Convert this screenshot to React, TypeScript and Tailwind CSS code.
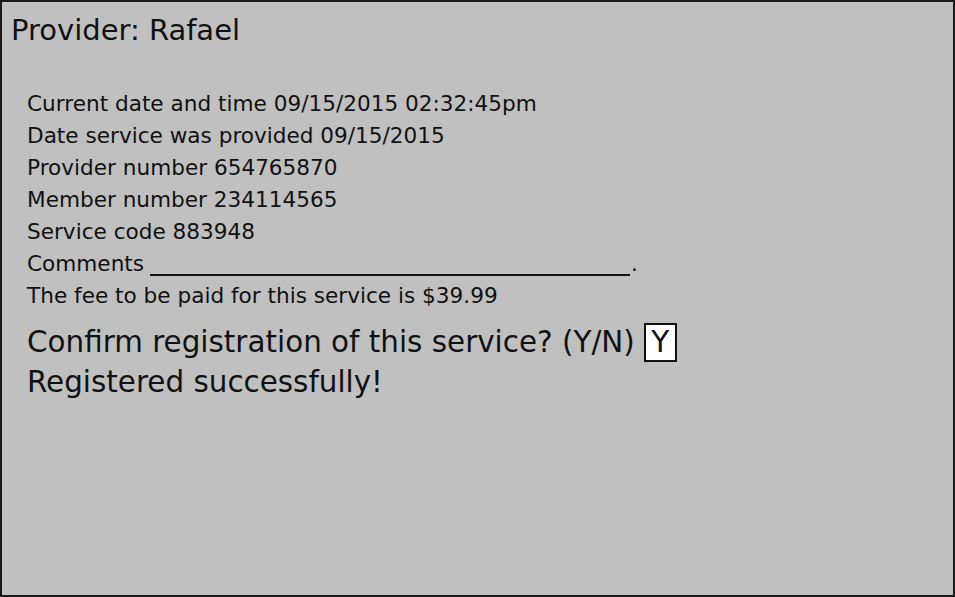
export default function App() {
  const lines = [
    "Current date and time 09/15/2015 02:32:45pm",
    "Date service was provided 09/15/2015",
    "Provider number 654765870",
    "Member number 234114565",
    "Service code 883948",
  ];

  return (
    <div className="h-[597px] w-[955px] bg-white" style={{ fontFamily: "'DejaVu Sans', 'Liberation Sans', sans-serif" }}>
      <div className="h-[597px] w-[955px] border-2 border-[#1a1a1a] bg-[#c0c0c0] text-[#111]">
        <h1 className="ml-[9px] mt-[12px] text-[29px] leading-[32px]">Provider: Rafael</h1>
        <div className="ml-[25px] mt-[42px] flex flex-col">
          {lines.map((line) => (
            <p key={line} className="text-[21.6px] leading-[32px]">{line}</p>
          ))}
          <p className="flex items-end text-[21.6px] leading-[32px]">
            Comments
            <span className="mb-[4px] ml-[6px] inline-block w-[480px] border-b-2 border-[#111]" />
            <span className="ml-[1px]">.</span>
          </p>
          <p className="text-[21.6px] leading-[32px]">The fee to be paid for this service is $39.99</p>
          <div className="mt-[10px] flex items-center text-[29.4px] leading-[40px]">
            <span>Confirm registration of this service? (Y/N)</span>
            <span className="ml-[9px] flex h-[39px] w-[33px] items-center justify-center border-2 border-[#111] bg-white">Y</span>
          </div>
          <p className="text-[29.4px] leading-[40px]">Registered successfully!</p>
        </div>
      </div>
    </div>
  );
}
